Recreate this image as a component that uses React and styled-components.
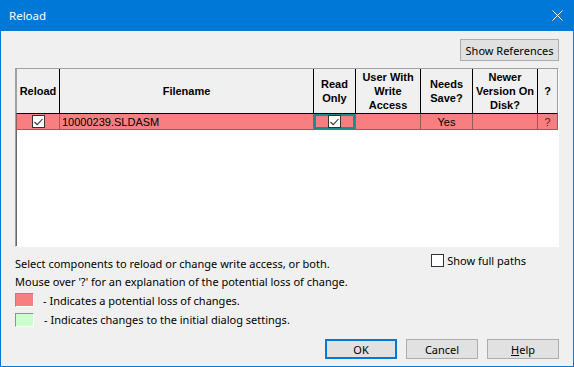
import styled, { createGlobalStyle } from 'styled-components';

const GlobalStyle = createGlobalStyle`
  html, body {
    margin: 0;
    padding: 0;
    background: #f0f0f0;
  }
  * {
    box-sizing: border-box;
  }
`;

const Window = styled.div`
  width: 574px;
  height: 367px;
  display: flex;
  flex-direction: column;
  background: #f0f0f0;
  border: 1px solid #0078d7;
  border-top: none;
  font-family: "Noto Sans", "Open Sans", sans-serif;
  font-size: 11px;
  color: #000;
`;

const TitleBar = styled.div`
  height: 31px;
  margin: 0 -1px;
  padding: 0 10px 0 9px;
  background: #0078d7;
  color: #fff;
  display: flex;
  align-items: center;
  justify-content: space-between;
  font-size: 11.5px;
`;

const CloseIcon = styled.svg`
  width: 11px;
  height: 11px;
  margin-right: 1px;
`;

const Body = styled.div`
  flex: 1;
  display: flex;
  flex-direction: column;
  padding: 8px 14px 0;
`;

const TopBar = styled.div`
  display: flex;
  justify-content: flex-end;
`;

const Button = styled.button`
  height: ${(p) => p.$h || 20}px;
  width: ${(p) => (p.$w ? `${p.$w}px` : 'auto')};
  padding: 0 4px;
  white-space: nowrap;
  background: #e1e1e1;
  border: ${(p) => (p.$default ? '2px solid #0078d7' : '1px solid #adadad')};
  font-family: "Noto Sans", "Open Sans", sans-serif;
  font-size: 11px;
  color: #000;
  line-height: 1;

  u {
    text-decoration: underline;
  }
`;

const TableBox = styled.div`
  margin-top: 7px;
  height: 179px;
  background: #fff;
  border: 1px solid;
  border-color: #a0a0a0 #ffffff #ffffff #a0a0a0;
  box-shadow: inset 1px 1px 0 #696969;
  font-family: "Liberation Sans", Arial, sans-serif;
  font-size: 11px;
`;

const Row = styled.div`
  display: grid;
  grid-template-columns: 44px 254px 42px 65px 52px 65px 20px;
`;

const HeadCell = styled.div`
  height: 45px;
  background: #f0f0f0;
  border-right: 1px solid #000;
  border-bottom: 1px solid #000;
  display: flex;
  align-items: center;
  justify-content: center;
  text-align: center;
  font-weight: bold;
  line-height: 14px;

  &:first-child {
    border-left: 1px solid #a0a0a0;
  }
  &:last-child {
    border-right: 1px solid #a0a0a0;
  }
`;

const Cell = styled.div`
  position: relative;
  height: 16px;
  background: #f77f7f;
  border-right: 1px solid #8a6060;
  border-bottom: 1px solid #8a6060;
  display: flex;
  align-items: center;
  justify-content: ${(p) => (p.$left ? 'flex-start' : 'center')};
  padding-left: ${(p) => (p.$left ? '2px' : '0')};
  color: ${(p) => p.$color || '#000'};
  box-shadow: ${(p) => (p.$focus ? 'inset 0 0 0 2px #1b8c8c' : 'none')};

  &:first-child {
    border-left: 1px solid #8a6060;
  }
`;

const CheckBox = styled.span`
  width: 13px;
  height: 13px;
  background: #fff;
  border: 1px solid #333;
  display: inline-flex;
  align-items: center;
  justify-content: center;
  flex-shrink: 0;
`;

const Check = () => (
  <svg width="9" height="8" viewBox="0 0 9 8">
    <path d="M0.5 4 L3.2 6.7 L8.5 1" fill="none" stroke="#333" strokeWidth="1.1" />
  </svg>
);

const Lower = styled.div`
  display: flex;
  justify-content: space-between;
  margin-top: 7px;
`;

const Notes = styled.div`
  display: flex;
  flex-direction: column;
`;

const Note = styled.div`
  height: ${(p) => p.$h || 18}px;
  display: flex;
  align-items: center;
`;

const Swatch = styled.span`
  width: 19px;
  height: 14px;
  background: ${(p) => p.$color};
  border: 1px solid;
  border-color: #909090 #ffffff #ffffff #909090;
  margin-right: ${(p) => p.$gap}px;
`;

const FullPaths = styled.label`
  display: flex;
  align-items: center;
  gap: 3px;
  height: 14px;
  margin-top: -1px;
  margin-right: 33px;
`;

const EmptyBox = styled.span`
  width: 13px;
  height: 13px;
  background: #fff;
  border: 1px solid #333;
`;

const Footer = styled.div`
  display: flex;
  justify-content: flex-end;
  gap: 9px;
  margin-top: 10px;
`;

export default function App() {
  return (
    <>
      <GlobalStyle />
      <Window>
        <TitleBar>
          <span>Reload</span>
          <CloseIcon viewBox="0 0 11 11">
            <path d="M0.5 0.5 L10.5 10.5 M10.5 0.5 L0.5 10.5" stroke="#fff" strokeWidth="1" />
          </CloseIcon>
        </TitleBar>
        <Body>
          <TopBar>
            <Button $h={22} $w={99}>Show References</Button>
          </TopBar>
          <TableBox>
            <Row>
              <HeadCell>Reload</HeadCell>
              <HeadCell>Filename</HeadCell>
              <HeadCell>Read<br />Only</HeadCell>
              <HeadCell>User With<br />Write<br />Access</HeadCell>
              <HeadCell>Needs<br />Save?</HeadCell>
              <HeadCell>Newer<br />Version On<br />Disk?</HeadCell>
              <HeadCell>?</HeadCell>
            </Row>
            <Row>
              <Cell><CheckBox><Check /></CheckBox></Cell>
              <Cell $left>10000239.SLDASM</Cell>
              <Cell $focus><CheckBox><Check /></CheckBox></Cell>
              <Cell />
              <Cell>Yes</Cell>
              <Cell />
              <Cell $color="#5a2020">?</Cell>
            </Row>
          </TableBox>
          <Lower>
            <Notes>
              <Note>Select components to reload or change write access, or both.</Note>
              <Note>Mouse over &apos;?&apos; for an explanation of the potential loss of change.</Note>
              <Note $h={20}>
                <Swatch $color="#f77f7f" $gap={9} />
                - Indicates a potential loss of changes.
              </Note>
              <Note $h={19}>
                <Swatch $color="#ccffcc" $gap={10} />
                - Indicates changes to the initial dialog settings.
              </Note>
            </Notes>
            <FullPaths>
              <EmptyBox />
              Show full paths
            </FullPaths>
          </Lower>
          <Footer>
            <Button $w={72} $default>OK</Button>
            <Button $w={72}>Cancel</Button>
            <Button $w={72}><u>H</u>elp</Button>
          </Footer>
        </Body>
      </Window>
    </>
  );
}
